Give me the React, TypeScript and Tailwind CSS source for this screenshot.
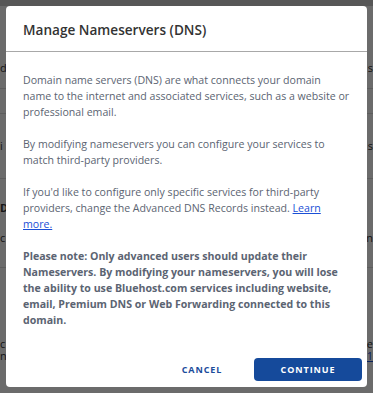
import React from "react";

function BackgroundPage() {
  // the page behind the dialog; only its edges show
  return (
    <div className="flex h-full flex-col bg-white text-[11px] text-[#333]">
      <div className="h-[6px] bg-[#cfcfcf]" />
      <div className="flex h-[82px] items-end justify-between pb-[12px]">
        <span>d</span>
        <span>s</span>
      </div>
      <div className="h-[25px] border-t border-[#ddd]" />
      <div className="flex h-[65px] items-center justify-between border-t border-[#ddd]">
        <span>i</span>
        <span>s</span>
      </div>
      <div className="flex h-[89px] flex-col justify-center border-t border-[#ddd]">
        <span className="font-bold">D</span>
        <div className="mt-[14px] flex justify-between">
          <span>c</span>
          <span>n</span>
        </div>
      </div>
      <div className="flex flex-col border-t border-[#ddd] pt-[70px] leading-[12px]">
        <div className="flex justify-between">
          <span>c</span>
          <span>re</span>
        </div>
        <div className="flex justify-between">
          <span>ne</span>
          <span className="text-[#1a4fd6] underline">1</span>
        </div>
      </div>
    </div>
  );
}

export default function App() {
  return (
    <div
      className="relative h-[393px] w-[373px] overflow-hidden"
      style={{ fontFamily: '"Open Sans", "Liberation Sans", sans-serif' }}
    >
      <BackgroundPage />
      <div className="absolute inset-0 bg-black/[0.58]" />

      <div className="absolute left-[6px] top-[6px] w-[361px] rounded-[4px] bg-white">
        <div className="border-b border-[#a8a8a8] px-[17px] pb-[9px] pt-[12px]">
          <h2 className="text-[13.6px] font-semibold leading-[24px] text-[#333]">
            Manage Nameservers (DNS)
          </h2>
        </div>

        <div className="space-y-[16px] px-[17px] pt-[20px] text-[10.6px] leading-[16px] text-[#5b6472]">
          <p>
            Domain name servers (DNS) are what connects your domain name to the internet and
            associated services, such as a website or professional email.
          </p>
          <p>By modifying nameservers you can configure your services to match third-party providers.</p>
          <p>
            If you'd like to configure only specific services for third-party providers, change
            the Advanced DNS Records instead.{" "}
            <a href="#" className="text-[#1a4fd6] underline">
              Learn more.
            </a>
          </p>
          <p className="font-bold">
            Please note: Only advanced users should update their Nameservers. By modifying your
            nameservers, you will lose the ability to use Bluehost.com services including website,
            email, Premium DNS or Web Forwarding connected to this domain.
          </p>
        </div>

        <div className="flex items-center justify-end gap-[4px] px-[5px] pb-[6px] pt-[30px]">
          <button className="h-[23px] w-[96px] text-[9px] font-bold uppercase tracking-[0.1em] text-[#1b4c9b]">
            Cancel
          </button>
          <button className="h-[23px] w-[108px] rounded-[4px] bg-[#154a9b] text-[9px] font-bold uppercase tracking-[0.1em] text-white">
            Continue
          </button>
        </div>
      </div>
    </div>
  );
}
